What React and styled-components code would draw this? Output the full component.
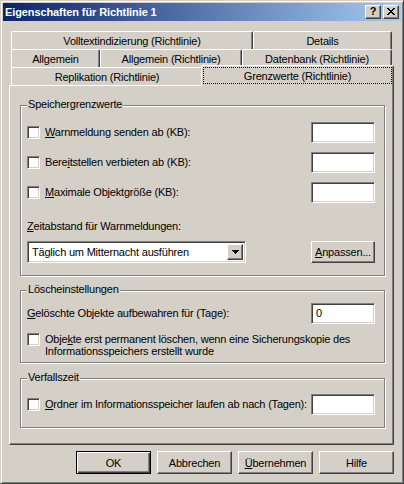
import React from 'react';
import styled, { createGlobalStyle, css } from 'styled-components';

const FACE = '#d4d0c8';
const SHADOW = '#808080';
const DARK = '#404040';

const GlobalStyle = createGlobalStyle`
  html, body { margin: 0; padding: 0; background: ${FACE}; }
  body {
    font-family: "Liberation Sans", Arial, sans-serif;
    font-size: 11px;
    letter-spacing: -0.2px;
    color: #000;
  }
  * { box-sizing: border-box; }
`;

const Window = styled.div`
  width: 404px;
  height: 484px;
  background: ${FACE};
  border: 1px solid;
  border-color: ${FACE} ${DARK} ${DARK} ${FACE};
  box-shadow: inset 1px 1px 0 #fff, inset -1px -1px 0 ${SHADOW};
  padding: 2px;
  display: flex;
  flex-direction: column;
`;

const TitleBar = styled.div`
  height: 18px;
  flex: none;
  background: linear-gradient(to right, #0a246a, #a6caf0);
  display: flex;
  align-items: center;
  justify-content: space-between;
  padding: 0 2px 0 2px;
`;

const TitleText = styled.div`
  color: #fff;
  font-weight: bold;
  font-size: 11px;
  letter-spacing: -0.1px;
  white-space: nowrap;
`;

const CaptionButtons = styled.div`
  display: flex;
  gap: 2px;
`;

const CaptionButton = styled.div`
  width: 16px;
  height: 14px;
  background: ${FACE};
  border: 1px solid;
  border-color: #fff ${DARK} ${DARK} #fff;
  box-shadow: inset -1px -1px 0 ${SHADOW};
  display: flex;
  align-items: center;
  justify-content: center;
  font-weight: bold;
  font-size: 11px;
  letter-spacing: 0;
  line-height: 1;
  padding-bottom: 1px;
`;

const Client = styled.div`
  flex: 1;
  display: flex;
  flex-direction: column;
  padding: 10px 7px 0 6px;
`;

const TabControl = styled.div`
  display: flex;
  flex-direction: column;
`;

const TabRow = styled.div`
  display: flex;
  height: 18px;
  align-items: flex-start;
  padding: 0 2px;
`;

const Tab = styled.div`
  width: ${p => p.$w}px;
  height: 18px;
  flex: none;
  background: ${FACE};
  border-top: 1px solid #fff;
  border-left: 1px solid #fff;
  border-right: 1px solid ${DARK};
  border-radius: 2px 2px 0 0;
  box-shadow: inset -1px 0 0 ${SHADOW};
  display: flex;
  align-items: center;
  justify-content: center;
  padding-top: 1px;
  white-space: nowrap;
  ${p => p.$selected && css`
    position: relative;
    z-index: 1;
    width: ${p.$w + 4}px;
    height: 21px;
    margin: -2px -2px 0 -2px;
    align-items: flex-start;
    padding: 1px 1px 0 1px;
  `}
`;

const FocusRect = styled.div`
  width: 189px;
  height: 17px;
  border: 1px dotted #000;
  display: flex;
  align-items: center;
  justify-content: center;
`;

const Panel = styled.div`
  height: 360px;
  border: 1px solid;
  border-color: #fff ${DARK} ${DARK} #fff;
  box-shadow: inset -1px -1px 0 ${SHADOW};
  padding: 19px 8px 0 10px;
  display: flex;
  flex-direction: column;
`;

const GroupBox = styled.div`
  position: relative;
  height: ${p => p.$h}px;
  margin-top: ${p => p.$mt || 0}px;
  flex: none;
  border: 1px solid ${SHADOW};
  box-shadow: inset 1px 1px 0 #fff, 1px 1px 0 #fff;
  padding: ${p => p.$pt}px 9px 0 6px;
  display: flex;
  flex-direction: column;
`;

const Legend = styled.div`
  position: absolute;
  top: -8px;
  left: 6px;
  padding: 0 1px;
  line-height: 13px;
  background: ${FACE};
  white-space: nowrap;
`;

const FieldRow = styled.div`
  height: 21px;
  flex: none;
  display: flex;
  align-items: center;
  justify-content: space-between;
  margin-top: ${p => p.$mt || 0}px;
`;

const CheckLabel = styled.label`
  display: flex;
  align-items: ${p => (p.$top ? 'flex-start' : 'center')};
  gap: 5px;
  min-width: 0;
  white-space: nowrap;
  margin-top: ${p => p.$mt || 0}px;
`;

const Sunken = css`
  background: #fff;
  border: 1px solid;
  border-color: ${SHADOW} #fff #fff ${SHADOW};
  box-shadow: inset 1px 1px 0 ${DARK}, inset -1px -1px 0 ${FACE};
`;

const CheckBox = styled.span`
  ${Sunken}
  width: 13px;
  height: 13px;
  flex: none;
`;

const LabelText = styled.span`
  line-height: ${p => p.$lh || 13}px;
  white-space: ${p => (p.$wrap ? 'normal' : 'nowrap')};
`;

const TextBox = styled.div`
  ${Sunken}
  width: 64px;
  height: 21px;
  flex: none;
  padding: 2px 0 0 4px;
  line-height: 15px;
`;

const PlainLabel = styled.div`
  line-height: 13px;
  margin-top: ${p => p.$mt || 0}px;
  white-space: nowrap;
`;

const ComboRow = styled.div`
  display: flex;
  justify-content: space-between;
  align-items: flex-start;
  margin-top: ${p => p.$mt || 0}px;
`;

const Combo = styled.div`
  ${Sunken}
  width: 219px;
  height: 22px;
  display: flex;
  align-items: stretch;
  padding: 2px;
`;

const ComboText = styled.div`
  flex: 1;
  padding-left: 2px;
  display: flex;
  align-items: center;
  white-space: nowrap;
`;

const Raised = css`
  background: ${FACE};
  border: 1px solid;
  border-color: #fff ${DARK} ${DARK} #fff;
  box-shadow: inset -1px -1px 0 ${SHADOW};
`;

const ComboArrow = styled.div`
  ${Raised}
  width: 16px;
  display: flex;
  align-items: center;
  justify-content: center;
`;

const PushButton = styled.div`
  ${Raised}
  width: ${p => p.$w || 75}px;
  height: ${p => p.$h || 23}px;
  flex: none;
  display: flex;
  align-items: center;
  justify-content: center;
  white-space: nowrap;
  ${p => p.$default && css`
    border: 1px solid #000;
    box-shadow: inset 1px 1px 0 #fff, inset -1px -1px 0 ${DARK}, inset -2px -2px 0 ${SHADOW};
  `}
`;

const ButtonBar = styled.div`
  display: flex;
  justify-content: flex-end;
  gap: 6px;
  margin-top: 6px;
`;

const CloseGlyph = () => (
  <svg width="8" height="7" viewBox="0 0 8 7" shapeRendering="crispEdges">
    <path d="M0 0h2v1h-2zM6 0h2v1h-2zM1 1h2v1h-2zM5 1h2v1h-2zM2 2h4v1h-4zM3 3h2v1h-2zM2 4h4v1h-4zM1 5h2v1h-2zM5 5h2v1h-2zM0 6h2v1h-2zM6 6h2v1h-2z" fill="#000" />
  </svg>
);

const ArrowGlyph = () => (
  <svg width="7" height="4" viewBox="0 0 7 4" shapeRendering="crispEdges">
    <path d="M0 0h7v1h-7zM1 1h5v1h-5zM2 2h3v1h-3zM3 3h1v1h-1z" fill="#000" />
  </svg>
);

export default function App() {
  return (
    <>
      <GlobalStyle />
      <Window>
        <TitleBar>
          <TitleText>Eigenschaften für Richtlinie 1</TitleText>
          <CaptionButtons>
            <CaptionButton>?</CaptionButton>
            <CaptionButton><CloseGlyph /></CaptionButton>
          </CaptionButtons>
        </TitleBar>
        <Client>
          <TabControl>
            <TabRow>
              <Tab $w={242}>Volltextindizierung (Richtlinie)</Tab>
              <Tab $w={139}>Details</Tab>
            </TabRow>
            <TabRow>
              <Tab $w={89}>Allgemein</Tab>
              <Tab $w={142}>Allgemein (Richtlinie)</Tab>
              <Tab $w={150}>Datenbank (Richtlinie)</Tab>
            </TabRow>
            <TabRow>
              <Tab $w={192}>Replikation (Richtlinie)</Tab>
              <Tab $w={189} $selected>
                <FocusRect>Grenzwerte (Richtlinie)</FocusRect>
              </Tab>
            </TabRow>
            <Panel>
              <GroupBox $h={171} $pt={16}>
                <Legend>Speichergrenzwerte</Legend>
                <FieldRow>
                  <CheckLabel><CheckBox /><LabelText><u>W</u>arnmeldung senden ab (KB):</LabelText></CheckLabel>
                  <TextBox />
                </FieldRow>
                <FieldRow $mt={9}>
                  <CheckLabel><CheckBox /><LabelText>Bere<u>i</u>tstellen verbieten ab (KB):</LabelText></CheckLabel>
                  <TextBox />
                </FieldRow>
                <FieldRow $mt={9}>
                  <CheckLabel><CheckBox /><LabelText><u>M</u>aximale Objektgröße (KB):</LabelText></CheckLabel>
                  <TextBox />
                </FieldRow>
                <PlainLabel $mt={17}><u>Z</u>eitabstand für Warnmeldungen:</PlainLabel>
                <ComboRow $mt={8}>
                  <Combo>
                    <ComboText>Täglich um Mitternacht ausführen</ComboText>
                    <ComboArrow><ArrowGlyph /></ComboArrow>
                  </Combo>
                  <PushButton $w={64} $h={22}><u>A</u>npassen...</PushButton>
                </ComboRow>
              </GroupBox>
              <GroupBox $h={73} $pt={12} $mt={14}>
                <Legend>Löscheinstellungen</Legend>
                <FieldRow>
                  <PlainLabel><u>G</u>elöschte Objekte aufbewahren für (Tage):</PlainLabel>
                  <TextBox>0</TextBox>
                </FieldRow>
                <CheckLabel $top $mt={9}>
                  <CheckBox />
                  <LabelText $wrap $lh={12}>Obje<u>k</u>te erst permanent löschen, wenn eine Sicherungskopie des<br />Informationsspeichers erstellt wurde</LabelText>
                </CheckLabel>
              </GroupBox>
              <GroupBox $h={50} $pt={15} $mt={15}>
                <Legend>Verfallszeit</Legend>
                <FieldRow>
                  <CheckLabel><CheckBox /><LabelText><u>O</u>rdner im Informationsspeicher laufen ab nach (Tagen):</LabelText></CheckLabel>
                  <TextBox />
                </FieldRow>
              </GroupBox>
            </Panel>
          </TabControl>
          <ButtonBar>
            <PushButton $default>OK</PushButton>
            <PushButton>Abbrechen</PushButton>
            <PushButton><u>Ü</u>bernehmen</PushButton>
            <PushButton>Hilfe</PushButton>
          </ButtonBar>
        </Client>
      </Window>
    </>
  );
}
